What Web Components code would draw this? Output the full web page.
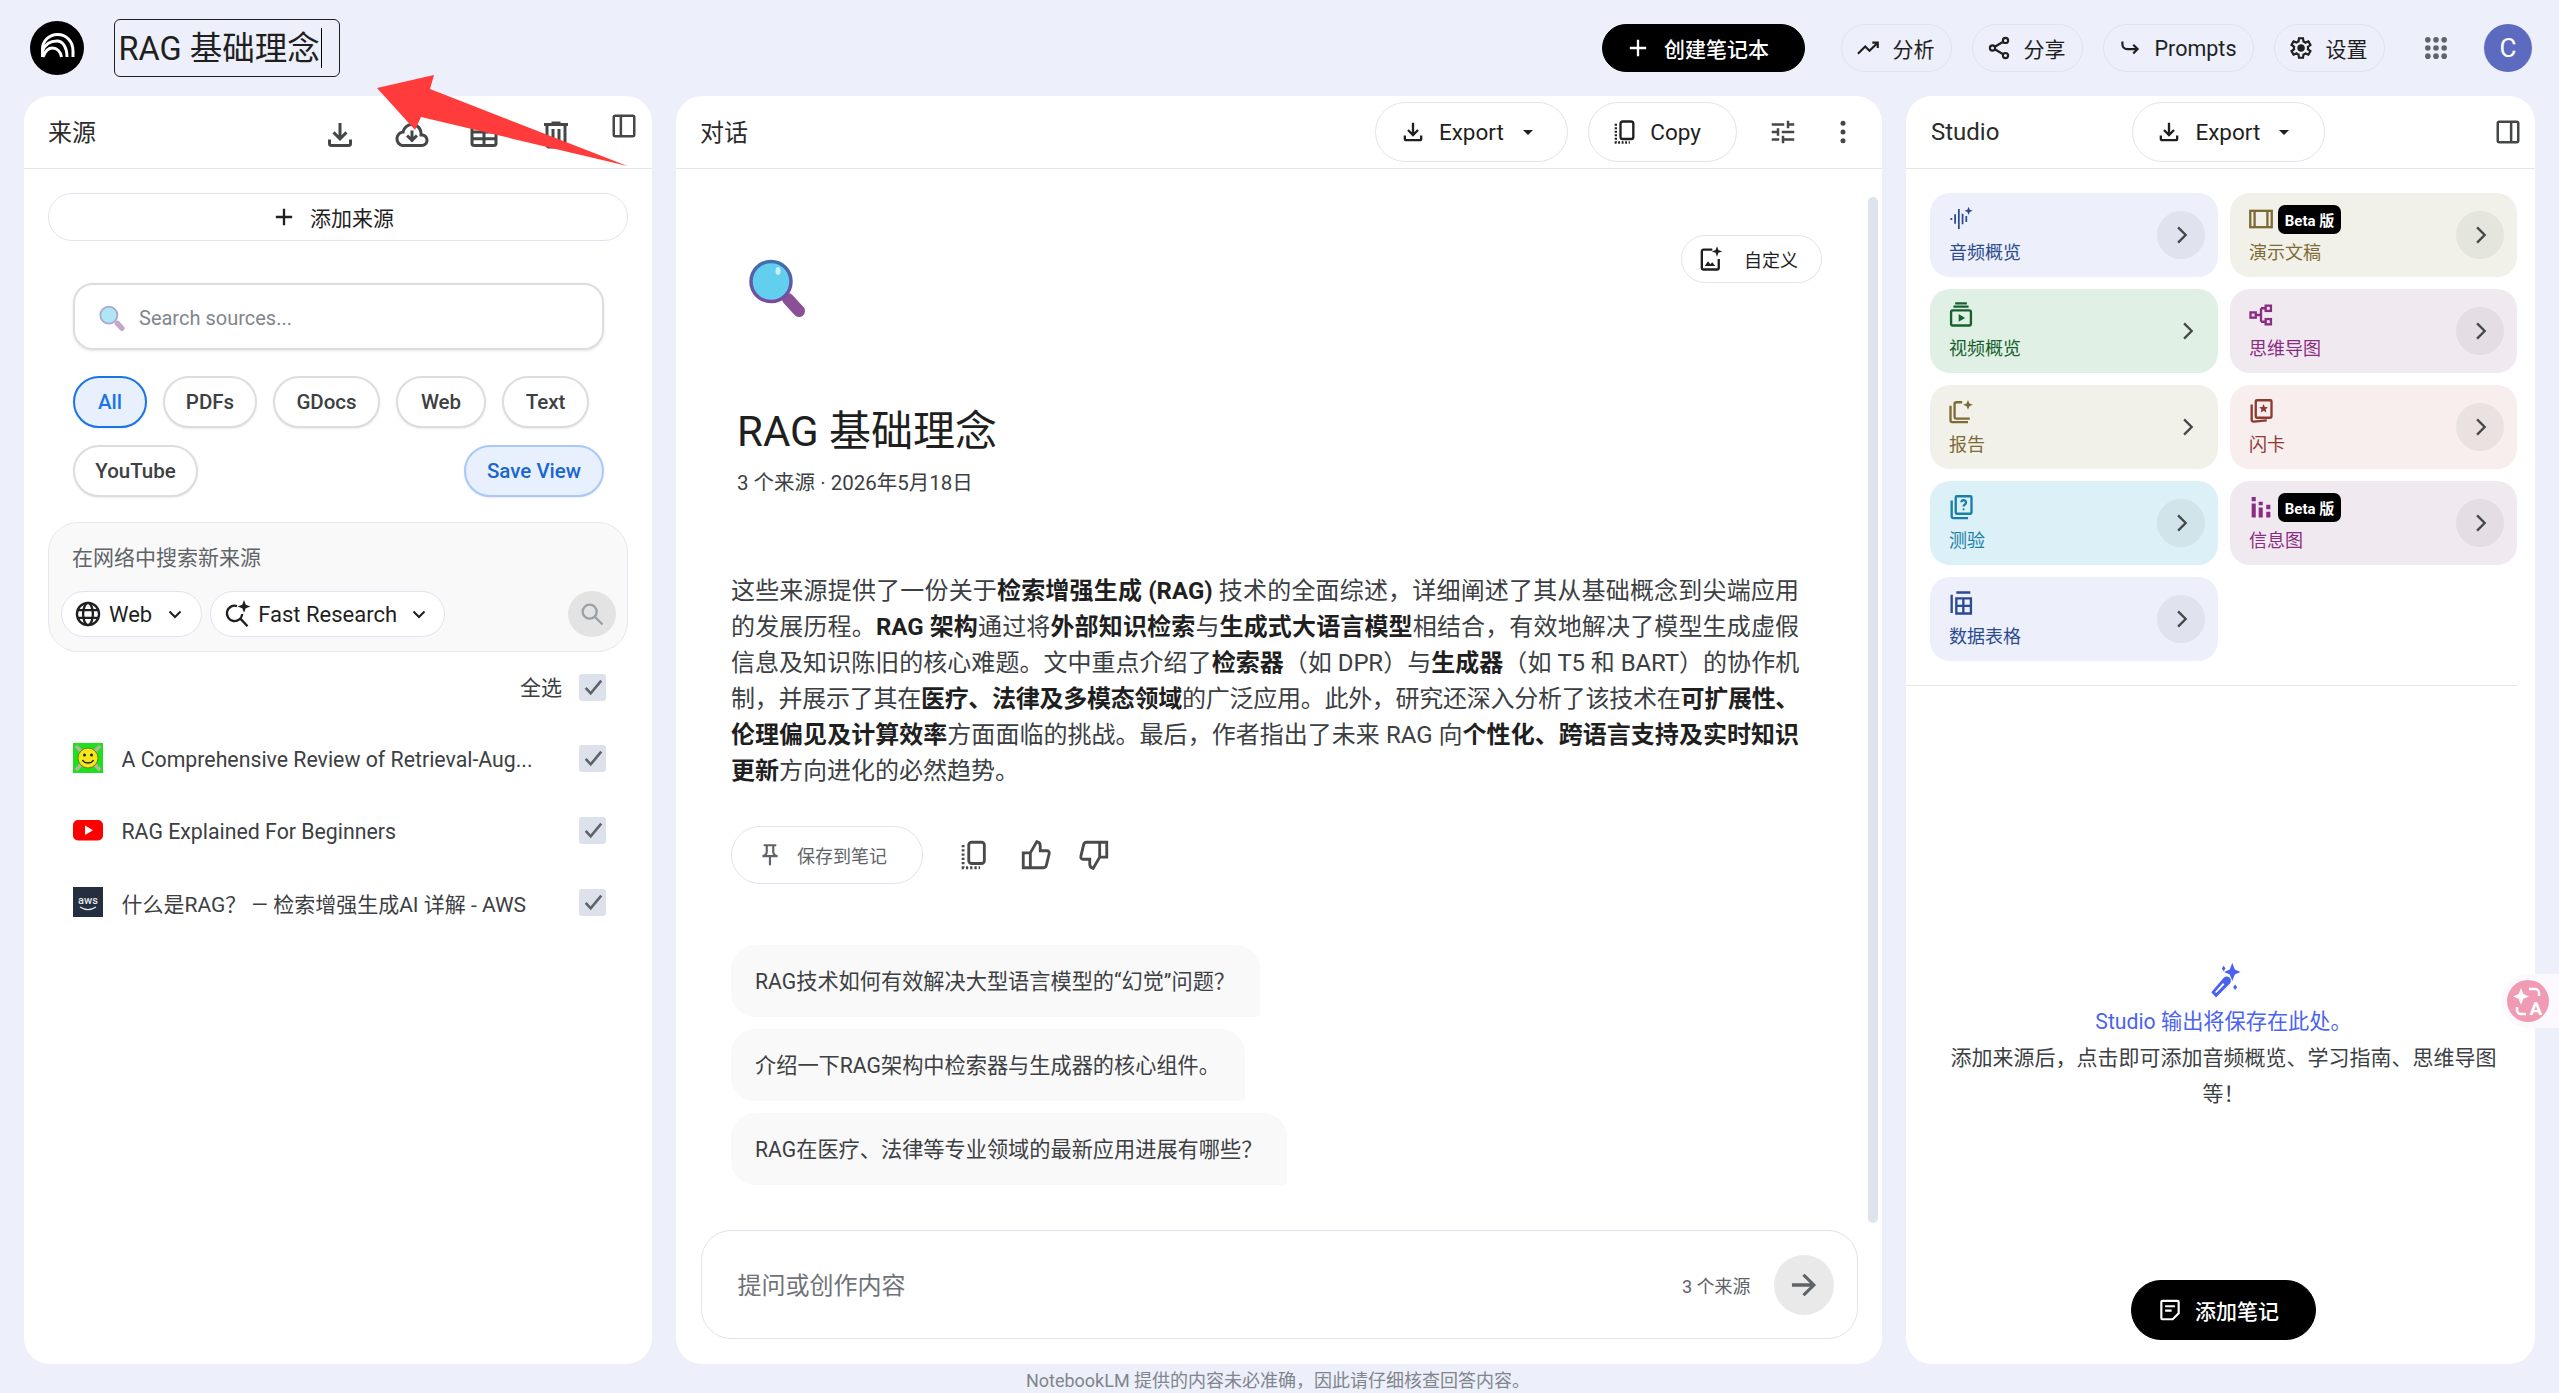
<!DOCTYPE html>
<html lang="zh">
<head>
<meta charset="utf-8">
<title>RAG 基础理念 - NotebookLM</title>
<style>
  html, body { margin: 0; height: 100%; overflow: hidden; background: #edeffa; font-family: Roboto, "Noto Sans CJK SC", sans-serif; }
</style>
</head>
<body>
<nb-app></nb-app>
<script>
/**
 * Icon bodies, all drawn on a 24x24 box. Colour comes from currentColor.
 */
const S = 'fill="none" stroke="currentColor" stroke-width="2"'
const ICONS = {
  plus: '<path d="M11 13H5v-2h6V5h2v6h6v2h-6v6h-2v-6z"/>',
  download: '<path d="M12 16l-5-5 1.4-1.45L11 12.15V4h2v8.15l2.6-2.6L17 11l-5 5zm-6 4c-.55 0-1.02-.2-1.41-.59C4.2 19.02 4 18.55 4 18v-3h2v3h12v-3h2v3c0 .55-.2 1.02-.59 1.41-.39.39-.86.59-1.41.59H6z"/>',
  cloud: '<path d="M11 13.15V9h2v4.15l1.6-1.55L16 13l-4 4-4-4 1.4-1.4 1.6 1.55zM6.5 20c-1.52 0-2.81-.53-3.89-1.58C1.54 17.38 1 16.1 1 14.6c0-1.3.39-2.46 1.17-3.48C2.95 10.1 3.97 9.45 5.25 9.15 5.67 7.62 6.5 6.38 7.75 5.43 9 4.48 10.42 4 12 4c1.95 0 3.6.68 4.96 2.04C18.32 7.4 19 9.05 19 11c1.15.13 2.1.63 2.86 1.49.76.86 1.14 1.86 1.14 3.01 0 1.25-.44 2.31-1.31 3.19-.88.87-1.94 1.31-3.19 1.31H6.5zm0-2h12c.7 0 1.29-.24 1.77-.73.49-.48.73-1.07.73-1.77s-.24-1.29-.73-1.77c-.48-.49-1.07-.73-1.77-.73H17v-2c0-1.38-.49-2.56-1.46-3.54C14.56 6.49 13.38 6 12 6s-2.56.49-3.54 1.46C7.49 8.44 7 9.62 7 11h-.5c-.97 0-1.79.34-2.47 1.03C3.34 12.71 3 13.53 3 14.5s.34 1.79 1.03 2.47C4.71 17.66 5.53 18 6.5 18z"/>',
  table: `<rect x="4" y="5" width="16" height="14" rx="1.5" ${S}/><path d="M4 10h16M4 14.5h16M12 10v9" ${S}/>`,
  trash: '<path d="M7 21c-.55 0-1.02-.2-1.41-.59C5.2 20.02 5 19.55 5 19V6H4V4h5V3h6v1h5v2h-1v13c0 .55-.2 1.02-.59 1.41-.39.39-.86.59-1.41.59H7zM17 6H7v13h10V6zM9 17h2V8H9v9zm4 0h2V8h-2v9z"/>',
  panelLeft: `<rect x="3.8" y="3.8" width="16.4" height="16.4" rx="1.2" ${S}/><path d="M9.5 4v16" ${S}/>`,
  panelRight: `<rect x="3.8" y="3.8" width="16.4" height="16.4" rx="1.2" ${S}/><path d="M14.5 4v16" ${S}/>`,
  trend: '<path d="M3.4 18 2 16.6 9.4 9.15l4 4L18.6 8H16V6h6v6h-2V9.4l-6.6 6.6-4-4L3.4 18z"/>',
  share: `<circle cx="18" cy="5" r="2.4" ${S}/><circle cx="6" cy="12" r="2.4" ${S}/><circle cx="18" cy="19" r="2.4" ${S}/><path d="M8.1 10.8l7.8-4.6M8.1 13.2l7.8 4.6" ${S}/>`,
  prompts: `<path d="M5 6v2.5A4.5 4.5 0 0 0 9.5 13H19M15 9l4 4-4 4" ${S}/>`,
  settings: '<path d="M9.25 22l-.4-3.2c-.22-.08-.42-.18-.61-.3-.2-.12-.39-.25-.58-.38l-2.97 1.25-2.75-4.75 2.58-1.95c-.02-.12-.03-.23-.03-.34v-.68c0-.11.01-.22.03-.34L1.94 9.36l2.75-4.75 2.97 1.25c.19-.13.38-.26.58-.38.2-.12.4-.22.6-.3l.4-3.2h5.5l.4 3.2c.22.08.42.18.61.3.2.12.39.25.58.38l2.97-1.25 2.75 4.75-2.58 1.95c.02.12.03.23.03.34v.68c0 .11-.01.22-.05.34l2.58 1.95-2.75 4.75-2.95-1.25c-.19.13-.38.26-.58.38-.2.12-.4.22-.6.3l-.4 3.2h-5.5zM11 20h1.97l.36-2.65c.52-.13.99-.33 1.43-.58.44-.26.84-.57 1.2-.94l2.48 1.02.97-1.7-2.15-1.63c.08-.23.14-.48.17-.73.03-.25.05-.51.05-.77s-.02-.52-.05-.77c-.03-.25-.09-.5-.17-.73l2.15-1.63-.97-1.7-2.48 1.05c-.36-.38-.76-.7-1.2-.96-.44-.26-.91-.46-1.43-.59L13 4h-1.97l-.35 2.65c-.52.13-.99.33-1.43.58-.44.26-.84.57-1.2.94L5.57 7.15l-.97 1.7 2.15 1.6c-.08.25-.14.5-.17.75-.03.25-.05.52-.05.8 0 .27.02.53.05.78.03.25.09.5.17.75l-2.15 1.62.97 1.7 2.48-1.05c.36.38.76.7 1.2.96.44.26.91.46 1.43.59L11 20zm1.05-4.5c.97 0 1.79-.34 2.48-1.03.68-.68 1.02-1.51 1.02-2.47s-.34-1.79-1.02-2.47C13.84 8.84 13.02 8.5 12.05 8.5c-.98 0-1.81.34-2.49 1.03-.67.68-1.01 1.51-1.01 2.47s.34 1.79 1.01 2.47c.68.69 1.51 1.03 2.49 1.03z"/>',
  apps: [5, 12, 19].flatMap(y => [5, 12, 19].map(x => `<circle cx="${x}" cy="${y}" r="2.4"/>`)).join(''),
  tune: '<path d="M11 21v-6h2v2h8v2h-8v2h-2zM3 19v-2h6v2H3zm4-4v-2H3v-2h4V9h2v6H7zm4-2v-2h10v2H11zm4-4V3h2v2h4v2h-4v2h-2zM3 7V5h10v2H3z"/>',
  more: '<circle cx="12" cy="5" r="2"/><circle cx="12" cy="12" r="2"/><circle cx="12" cy="19" r="2"/>',
  copy: `<rect x="9" y="3" width="11" height="15" rx="2" ${S}/><path d="M5 5v16h12" fill="none" stroke="currentColor" stroke-width="2" stroke-dasharray="1.6 1.4"/>`,
  caret: '<path d="M7 10l5 5 5-5z"/>',
  chevronDown: `<path d="M6.5 9.5l5.5 5.5 5.5-5.5" ${S} stroke-width="2.2"/>`,
  chevronRight: `<path d="M9.5 5.5L16 12l-6.5 6.5" ${S} stroke-width="2.2"/>`,
  globe: `<circle cx="12" cy="12" r="9.5" ${S}/><ellipse cx="12" cy="12" rx="4.2" ry="9.5" ${S}/><path d="M3 8.7h18M3 15.3h18" ${S}/>`,
  research: `<path d="M12 5.200A6.600 6.600 0 1 0 16.500 12" ${S} stroke-width="2.200"/><path d="M14.500 15.500l6.500 7" ${S} stroke-width="2.200"/><path d="M18 0l1.500 4 4 1.500-4 1.500-1.500 4-1.500-4-4-1.500 4-1.500z"/>`,
  search: `<circle cx="10" cy="10" r="6" ${S} stroke-width="2.2"/><path d="M14.5 14.5L21 21" ${S} stroke-width="2.4"/>`,
  customize: `<path d="M14 4H6.5A1.5 1.5 0 0 0 5 5.5v14A1.5 1.5 0 0 0 6.5 21H18a1.5 1.5 0 0 0 1.5-1.5V12" ${S}/><path d="M18 1l1.2 3.3L22.5 5.5l-3.3 1.2L18 10l-1.2-3.3L13.5 5.5l3.3-1.2zM7.5 18l2.8-4 2 2.4 1.6-1.7 2.6 3.3z"/>`,
  pin: '<path d="M14 4v5c0 1.12.37 2.16 1 3H9c.65-.86 1-1.9 1-3V4h4m3-2H7c-.55 0-1 .45-1 1s.45 1 1 1h1v5c0 1.66-1.34 3-3 3v2h5.97v7l1 1 1-1v-7H19v-2c-1.66 0-3-1.34-3-3V4h1c.55 0 1-.45 1-1s-.45-1-1-1z"/>',
  thumbUp: `<path d="M8 10.5V21M8 10.5l4.6-8c1.5.3 2.4 1.4 2.4 2.9V9h4.7c1.1 0 1.9 1 1.6 2.1l-2 8.2c-.2 1-1 1.7-2 1.7H3V10.5z" ${S} stroke-width="2.2"/>`,
  thumbDown: `<path d="M16 13.5V3M16 13.5l-4.6 8c-1.5-.3-2.4-1.4-2.4-2.9V15H4.3c-1.1 0-1.9-1-1.6-2.1l2-8.2C4.9 3.7 5.7 3 6.7 3H21v10.5z" ${S} stroke-width="2.2"/>`,
  send: '<path d="M16.2 13.2H3.5v-2.4h12.7l-5.4-5.4L12.5 4l8 8-8 8-1.7-1.4 5.4-5.4z"/>',
  audio: '<path d="M3 11.2h1.5v1.6H3zM6.2 8h1.5v8H6.2zM9.4 3.5h1.5v17H9.4zM12.6 7.5h1.5v9h-1.5zM15.8 9.5h1.5v5h-1.5z"/><path d="M18.5 1.5l1 2.5 2.5 1-2.5 1-1 2.5-1-2.5-2.5-1 2.5-1z"/>',
  slides: `<rect x="2.8" y="5" width="18.4" height="14" ${S}/><path d="M6.5 5v14M17.5 5v14" ${S}/>`,
  video: `<rect x="3.5" y="8" width="17" height="13" rx="1.5" ${S}/><path d="M5.5 4.8h13M7 2h10" ${S}/><path d="M10 11.2l5.5 3.3-5.5 3.3z"/>`,
  mindmap: `<rect x="3" y="9.8" width="4.5" height="4.5" ${S}/><rect x="16" y="4" width="4.5" height="4.5" ${S}/><rect x="16" y="15.5" width="4.5" height="4.5" ${S}/><path d="M7.5 12H12M12 6.2V17.8M12 6.2h4M12 17.8h4" ${S}/>`,
  report: `<path d="M13 4.500H8A1.500 1.500 0 0 0 6.500 6v11A1.500 1.500 0 0 0 8 18.500h11.500" ${S}/><path d="M3 7.500V20a1.500 1.500 0 0 0 1.500 1.500H18" ${S}/><path d="M18 2.500l1.200 3 3 1.200-3 1.200-1.200 3-1.200-3-3-1.200 3-1.200z"/>`,
  flash: `<rect x="7.500" y="2.800" width="13.500" height="15" rx="1" ${S}/><path d="M4 6.500V19.500c0 1 .8 1.700 1.700 1.600L17 20" ${S}/><path d="M14.200 6l1.100 2.500 2.700.2-2 1.800.6 2.700-2.400-1.400-2.400 1.400.6-2.700-2-1.800 2.700-.2z"/>`,
  quiz: `<rect x="7.500" y="2.800" width="13.500" height="15" rx="1" ${S}/><path d="M4 6.500V20a1.500 1.500 0 0 0 1.500 1.500H18" ${S}/><path d="M12.300 8a2 2 0 1 1 3 1.800c-.8.5-1.100.9-1.100 1.700" ${S} stroke-width="1.300"/><circle cx="14.200" cy="14" r=".9"/>`,
  info: '<path d="M4 9h3.500v12H4zM10 12.500h3.500V21H10zM10 7.500h3.500v3H10zM16.500 10h3.500v4h-3.500zM16.500 16h3.500v5h-3.500zM4 3.500h3.500V7H4z"/>',
  sheet: `<path d="M8 3H20M4 5V20.500M8 8h12.500v13H8zM14 8v13M8 14.500h12.500" ${S}/>`,
  wand: '<path d="M20.500 1l1.700 4.300L26 7l-3.800 1.700L20.500 13l-1.700-4.300L15 7l3.800-1.700z" transform="translate(-3.500 -1) scale(.95)"/><path d="M10.500 1.800l1.200 1.700-1.200 1.700-1.200-1.700zM17.800 13.500l1.300 1.800-1.300 1.800-1.300-1.800z"/><path d="M14.300 9.200c-1-1-2.600-1-3.600 0l-8 9.200 3 3.400 8.800-8.800c.9-1 .8-2.800-.2-3.800zM5.800 19l-.7-.7 5-5.600.9.9z"/>',
  note: `<path d="M5 3.500h14a1 1 0 0 1 1 1V15l-5.500 5.500H5a1 1 0 0 1-1-1v-15a1 1 0 0 1 1-1z" ${S} stroke-width="2.300"/><path d="M7.500 8.500h9M7.500 12.500h6" ${S} stroke-width="2.300"/>`
}

/**
 * A single icon out of the ICONS table.
 */
customElements.define('nb-icon', class extends HTMLElement {
  connectedCallback () {
    const size = this.getAttribute('size') || 24
    const root = this.shadowRoot || this.attachShadow({ mode: 'open' })
    root.innerHTML = `
      <style>:host { display: inline-flex; flex: none; width: ${size}px; height: ${size}px; color: inherit; } svg { width: 100%; height: 100%; fill: currentColor; }</style>
      <svg viewBox="0 0 24 24">${ICONS[this.getAttribute('name')] || ''}</svg>`
  }
})

/**
 * Rounded button with a leading icon, slotted label and an optional trailing icon.
 * The box is tuned from outside through custom properties.
 */
customElements.define('nb-pill', class extends HTMLElement {
  connectedCallback () {
    const icon = this.getAttribute('icon')
    const trail = this.getAttribute('trail')
    const root = this.shadowRoot || this.attachShadow({ mode: 'open' })
    root.innerHTML = `
      <style>
        :host {
          display: inline-flex; align-items: center; flex: none; box-sizing: border-box;
          height: var(--h, 60px); padding: 0 var(--pr, 24px) 0 var(--pl, 24px);
          border: 1.5px solid var(--line, #e1e3ef); border-radius: 999px;
          background: var(--bg, #fff); color: var(--fg, #1f1f1f);
          font-size: var(--fs, 21px); font-weight: var(--fw, 400); white-space: nowrap;
        }
        .label { margin: 0 var(--tgap, 0) 0 var(--gap, 12px); }
      </style>
      <nb-icon name="${icon}" size="${this.getAttribute('isize') || 28}"></nb-icon>
      <span class="label"><slot></slot></span>
      ${trail ? `<nb-icon name="${trail}" size="${this.getAttribute('tsize') || 24}"></nb-icon>` : ''}`
  }
})

/**
 * White rounded card with a header bar; `actions` slot on the right of the heading.
 */
customElements.define('nb-panel', class extends HTMLElement {
  constructor () {
    super()
    this.attachShadow({ mode: 'open' }).innerHTML = `
      <style>
        :host { display: flex; flex-direction: column; position: relative; min-width: 0; background: #fff; border-radius: 26px; overflow: hidden; }
        header { display: flex; align-items: center; flex: none; box-sizing: border-box; height: 73px; border-bottom: 1.5px solid #e3e6ee; padding: 0 0 0 var(--head-pl, 24px); font-size: 24px; color: #2b2b2b; }
        .body { flex: 1; display: flex; flex-direction: column; min-height: 0; }
      </style>
      <header><slot name="heading"></slot><slot name="actions"></slot></header>
      <div class="body"><slot></slot></div>`
  }
})

/**
 * Filter chip of the source list.
 */
customElements.define('filter-chip', class extends HTMLElement {
  constructor () {
    super()
    this.attachShadow({ mode: 'open' }).innerHTML = `
      <style>
        :host {
          display: inline-flex; align-items: center; justify-content: center; box-sizing: border-box;
          height: 52px; border: 2.5px solid #dcdde0; border-radius: 27px;
          box-shadow: 0 1px 2px rgba(0,0,0,.08); background: #fff;
          font-size: 20.5px; font-weight: 500; color: #3c4043;
        }
        :host([active]) { background: #e8f0fe; border-color: #1a73e8; color: #1a73e8; }
        :host([save]) { background: #e8f0fe; border-color: #a8c7fa; color: #1a66d0; margin-left: auto; }
      </style>
      <slot></slot>`
  }
})

/**
 * Grey check mark box.
 */
customElements.define('check-box', class extends HTMLElement {
  constructor () {
    super()
    this.attachShadow({ mode: 'open' }).innerHTML = `
      <style>
        :host { display: inline-flex; flex: none; width: 27px; height: 27px; background: #dde1ec; border-radius: 3px; align-items: center; justify-content: center; color: #5f6368; }
        svg { width: 22px; height: 22px; }
      </style>
      <svg viewBox="0 0 24 24"><path d="M4 13l5.500 6L21 5" fill="none" stroke="currentColor" stroke-width="2.800"/></svg>`
  }
})

/**
 * One source of the list: favicon in the slot, a title and a check box.
 */
customElements.define('source-row', class extends HTMLElement {
  connectedCallback () {
    const root = this.shadowRoot || this.attachShadow({ mode: 'open' })
    root.innerHTML = `
      <style>
        :host { display: flex; align-items: center; height: 72px; padding: 0 46px 0 49px; font-size: var(--tfs, 21.3px); color: #3c4043; }
        .fav { display: flex; width: 30px; height: 30px; flex: none; margin-right: 18.5px; }
        .title { flex: 1; white-space: nowrap; overflow: hidden; padding-top: 2px; }
      </style>
      <span class="fav"><slot name="fav"></slot></span>
      <span class="title">${this.getAttribute('title')}</span>
      <check-box></check-box>`
  }
})

/**
 * The left column.
 */
customElements.define('source-panel', class extends HTMLElement {
  constructor () {
    super()
    this.attachShadow({ mode: 'open' }).innerHTML = `
      <style>
        :host { display: flex; min-width: 0; }
        nb-panel { flex: 1; }
        .head { margin-top: -3px; }
        .acts { display: flex; align-items: center; margin-left: auto; color: #444746; padding-right: 13px; }
        .acts nb-icon { margin-top: 6px; margin-left: 36px; }
        .acts nb-icon:first-child { margin-left: 0; }
        .acts nb-icon.toggle { margin-top: -12px; margin-left: 35px; }
        .add {
          display: flex; align-items: center; justify-content: center; gap: 12px; box-sizing: border-box;
          height: 48px; margin: 24px 24px 0; padding-right: 12px; border: 1.5px solid #e1e3ef; border-radius: 24px; font-size: 21px; color: #1f1f1f;
        }
        .search {
          display: flex; align-items: center; box-sizing: border-box; height: 67px; margin: 42px 48px 0 49px; padding: 2px 0 0 24px;
          border: 2.5px solid #dcdde0; border-radius: 20px; box-shadow: 0 1px 3px rgba(0,0,0,.1); font-size: 20px; color: #80868b;
        }
        .search svg { width: 26px; height: 26px; margin-right: 14px; opacity: .5; }
        .chips { display: flex; flex-wrap: wrap; gap: 17px 16px; margin: 26px 48px 0 49px; }
        .web { box-sizing: border-box; height: 130px; margin: 25px 24px 0; border: 1.5px solid #e6e7f0; border-radius: 30px; background: #f9f9f9; padding: 22px 11px 0 12px; }
        .web .label { font-size: 21px; line-height: 26px; color: #5f6368; padding-left: 11px; }
        .web .tools { display: flex; align-items: center; gap: 8px; margin-top: 20px; --h: 46px; --fs: 22px; }
        .go { display: flex; align-items: center; justify-content: center; width: 48px; height: 46px; margin-left: auto; border-radius: 50%; background: #e3e3e3; color: #9aa0a6; }
        .all { display: flex; align-items: center; justify-content: flex-end; gap: 17px; height: 70px; padding-right: 46px; font-size: 21px; color: #3c4043; }
        .all span { margin-top: -3px; }
      </style>
      <nb-panel>
        <span slot="heading" class="head">来源</span>
        <div slot="actions" class="acts">
          <nb-icon name="download" size="36"></nb-icon>
          <nb-icon name="cloud" size="36"></nb-icon>
          <nb-icon name="table" size="36"></nb-icon>
          <nb-icon name="trash" size="36"></nb-icon>
          <nb-icon class="toggle" name="panelLeft" size="30"></nb-icon>
        </div>
        <div class="add"><nb-icon name="plus" size="28"></nb-icon><span>添加来源</span></div>
        <div class="search">
          <svg viewBox="0 0 58 58"><circle cx="22" cy="22.500" r="19" fill="#62cfee" stroke="#5a4ea0" stroke-width="4"/><path d="M41 41l10 11" stroke="#8a4f94" stroke-width="12" stroke-linecap="round"/></svg>
          <span>Search sources...</span>
        </div>
        <div class="chips">
          <filter-chip active style="width:74px">All</filter-chip>
          <filter-chip style="width:94px">PDFs</filter-chip>
          <filter-chip style="width:107px">GDocs</filter-chip>
          <filter-chip style="width:90px">Web</filter-chip>
          <filter-chip style="width:87px">Text</filter-chip>
          <filter-chip style="width:125px">YouTube</filter-chip>
          <filter-chip save style="width:140px">Save View</filter-chip>
        </div>
        <div class="web">
          <div class="label">在网络中搜索新来源</div>
          <div class="tools">
            <nb-pill icon="globe" isize="28" trail="chevronDown" tsize="24" style="--pl:12px;--pr:14px;--gap:7px;--tgap:11px">Web</nb-pill>
            <nb-pill icon="research" isize="28" trail="chevronDown" tsize="24" style="--pl:12px;--pr:13px;--gap:7px;--tgap:10px">Fast Research</nb-pill>
            <div class="go"><nb-icon name="search" size="28"></nb-icon></div>
          </div>
        </div>
        <div class="all"><span>全选</span><check-box></check-box></div>
        <source-row title="A Comprehensive Review of Retrieval-Aug...">
          <svg slot="fav" viewBox="0 0 30 30" width="30" height="30">
            <rect width="30" height="30" fill="#1fe01f"/>
            <path d="M4 4l22 22M26 4L4 26" stroke="#b9b49a" stroke-width="3.500" stroke-linecap="round"/>
            <circle cx="15" cy="15" r="10" fill="#f4e61a" stroke="#7d7a18"/>
            <circle cx="11.500" cy="12" r="1.500" fill="#222"/><circle cx="18.500" cy="12" r="1.500" fill="#222"/>
            <path d="M9.500 17c2 4 9 4 11 0" fill="none" stroke="#222" stroke-width="1.400"/>
          </svg>
        </source-row>
        <source-row title="RAG Explained For Beginners">
          <svg slot="fav" viewBox="0 0 30 30" width="30" height="30">
            <rect x="0" y="5" width="30" height="20.500" rx="5" fill="#f00"/>
            <path d="M12 10.500l8 4.700-8 4.700z" fill="#fff"/>
          </svg>
        </source-row>
        <source-row style="--tfs:21px" title="什么是RAG？ — 检索增强生成AI 详解 - AWS">
          <svg slot="fav" viewBox="0 0 30 30" width="30" height="30">
            <rect width="30" height="30" fill="#232f3e"/>
            <text x="15" y="17" text-anchor="middle" font-family="Roboto, sans-serif" font-size="11" font-weight="500" fill="#e6e8ea">aws</text>
            <path d="M7 20c5 3.200 11 3.200 16 0" fill="none" stroke="#e6e8ea" stroke-width="1.300"/>
          </svg>
        </source-row>
      </nb-panel>`
  }
})

/**
 * Suggested question bubble.
 */
customElements.define('suggest-chip', class extends HTMLElement {
  constructor () {
    super()
    this.attachShadow({ mode: 'open' }).innerHTML = `
      <style>
        :host { display: flex; align-items: center; box-sizing: border-box; width: fit-content; height: 72px; padding: 0 25px 3px 24px; background: #f9f9f9; border-radius: 24px 24px 4px 24px; font-size: 21.2px; color: #3c4043; }
      </style>
      <slot></slot>`
  }
})

/**
 * The middle column.
 */
customElements.define('chat-panel', class extends HTMLElement {
  constructor () {
    super()
    this.attachShadow({ mode: 'open' }).innerHTML = `
      <style>
        :host { display: flex; min-width: 0; }
        nb-panel { flex: 1; }
        .head { margin-top: -3px; }
        .acts { display: flex; align-items: center; margin-left: auto; padding-right: 24px; color: #444746; --fs: 22.5px; }
        .acts nb-pill { --h: 60px; margin-right: 20px; }
        .acts nb-icon { margin-left: 30px; }
        .acts nb-pill + nb-pill { margin-right: 1px; }
        .main { flex: 1; min-height: 0; padding: 66px 0 0 55px; }
        .top { display: flex; justify-content: space-between; align-items: flex-start; padding-right: 60px; }
        .emoji { width: 58px; height: 58px; margin: 24px 0 0 18px; }
        h1 { margin: 87px 0 0 6px; font-size: 42px; line-height: 56px; font-weight: 400; color: #1f1f1f; }
        .meta { margin: 8px 0 0 6px; font-size: 20.500px; line-height: 30px; color: #3c4043; }
        .sum { width: 1068px; margin: 75px 0 0; font-size: 24px; line-height: 36px; color: #3c4043; }
        .sum span { display: block; text-align: justify; text-align-last: justify; }
        .sum span:last-child { text-align-last: left; }
        .sum b { font-weight: 700; color: #1f1f1f; }
        .act { display: flex; align-items: center; margin-top: 37px; color: #4a4a4a; }
        .act nb-icon.c { margin-left: 33px; }
        .act nb-icon.u { margin-left: 29px; }
        .act nb-icon.d { margin-left: 24px; }
        .chips { display: flex; flex-direction: column; gap: 12px; margin-top: 61px; }
        .ask { display: flex; align-items: center; flex: none; box-sizing: border-box; height: 109px; margin: 0 24.500px 25px; padding: 0 23px 0 36px; border: 1.5px solid #e0e2ec; border-radius: 30px; }
        .ph { flex: 1; font-size: 24px; color: #6f7378; margin-top: -3px; }
        .cnt { font-size: 18px; color: #5f6368; margin-right: 23px; }
        .send { display: flex; align-items: center; justify-content: center; width: 60px; height: 60px; border-radius: 50%; background: #e9e9e9; color: #5f6368; }
        .thumb { position: absolute; right: 4px; top: 101px; width: 10px; height: 1026px; border-radius: 5px; background: #dfe3ee; }
      </style>
      <nb-panel>
        <span slot="heading" class="head">对话</span>
        <div slot="actions" class="acts">
          <nb-pill icon="download" trail="caret" isize="28" tsize="24" style="--pl:23px;--pr:27.5px;--gap:12px;--tgap:12px">Export</nb-pill>
          <nb-pill icon="copy" isize="28" style="--pl:21px;--pr:35px;--gap:12px">Copy</nb-pill>
          <nb-icon name="tune" size="30"></nb-icon>
          <nb-icon name="more" size="30"></nb-icon>
        </div>
        <div class="main">
          <div class="top">
            <svg class="emoji" viewBox="0 0 58 58">
              <defs><linearGradient id="h" x1="0" y1="0" x2="0" y2="1"><stop offset="0" stop-color="#3f6fb0"/><stop offset="1" stop-color="#7a4aa0"/></linearGradient></defs>
              <path d="M39 40l11 12" stroke="#8a4f94" stroke-width="12" stroke-linecap="round"/>
              <circle cx="22" cy="22.500" r="20" fill="#62cfee" stroke="url(#h)" stroke-width="3.500"/>
              <ellipse cx="29" cy="12" rx="2.500" ry="4" fill="#c8eff8"/>
            </svg>
            <nb-pill icon="customize" isize="28" style="--h:48px;--fs:18px;--pl:14px;--pr:23px;--gap:20px">自定义</nb-pill>
          </div>
          <h1>RAG 基础理念</h1>
          <div class="meta">3 个来源 · 2026年5月18日</div>
          <p class="sum">
            <span>这些来源提供了一份关于<b>检索增强生成 (RAG)</b> 技术的全面综述，详细阐述了其从基础概念到尖端应用</span>
            <span>的发展历程。<b>RAG 架构</b>通过将<b>外部知识检索</b>与<b>生成式大语言模型</b>相结合，有效地解决了模型生成虚假</span>
            <span style="letter-spacing:-.2px">信息及知识陈旧的核心难题。文中重点介绍了<b>检索器</b>（如 DPR）与<b>生成器</b>（如 T5 和 BART）的协作机</span>
            <span style="letter-spacing:-.35px">制，并展示了其在<b>医疗、法律及多模态领域</b>的广泛应用。此外，研究还深入分析了该技术在<b>可扩展性、</b></span>
            <span><b>伦理偏见及计算效率</b>方面面临的挑战。最后，作者指出了未来 RAG 向<b>个性化、跨语言支持及实时知识</b></span>
            <span><b>更新</b>方向进化的必然趋势。</span>
          </p>
          <div class="act">
            <nb-pill icon="pin" isize="26" style="--h:58px;--fs:18px;--fg:#5f6368;--pl:25px;--pr:35px;--gap:14px">保存到笔记</nb-pill>
            <nb-icon class="c" name="copy" size="34"></nb-icon>
            <nb-icon class="u" name="thumbUp" size="34"></nb-icon>
            <nb-icon class="d" name="thumbDown" size="34"></nb-icon>
          </div>
          <div class="chips">
            <suggest-chip>RAG技术如何有效解决大型语言模型的“幻觉”问题？</suggest-chip>
            <suggest-chip>介绍一下RAG架构中检索器与生成器的核心组件。</suggest-chip>
            <suggest-chip>RAG在医疗、法律等专业领域的最新应用进展有哪些？</suggest-chip>
          </div>
        </div>
        <div class="ask">
          <span class="ph">提问或创作内容</span>
          <span class="cnt">3 个来源</span>
          <span class="send"><nb-icon name="send" size="34"></nb-icon></span>
        </div>
        <div class="thumb"></div>
      </nb-panel>`
  }
})

/**
 * Tile of the Studio grid.
 */
customElements.define('studio-card', class extends HTMLElement {
  connectedCallback () {
    const root = this.shadowRoot || this.attachShadow({ mode: 'open' })
    const beta = this.hasAttribute('beta') ? '<span class="beta">Beta 版</span>' : ''
    root.innerHTML = `
      <style>
        :host { display: flex; align-items: center; box-sizing: border-box; height: 84px; padding: 0 13px 0 17px; border-radius: 20px; background: ${this.getAttribute('bg')}; color: ${this.getAttribute('fg')}; }
        .left { flex: 1; min-width: 0; }
        .top { display: flex; align-items: center; gap: 3px; height: 29px; margin-top: -1px; }
        .beta { display: inline-flex; align-items: center; justify-content: center; width: 63px; height: 29px; border-radius: 7px; background: #000; color: #fff; font-size: 15px; font-weight: 700; }
        .lab { margin: 7px 0 0 2px; font-size: 18px; line-height: 24px; }
        .arrow { display: flex; align-items: center; justify-content: center; width: 48px; height: 48px; border-radius: 50%; background: rgba(60,64,67,.07); color: #444746; }
        :host([flat]) .arrow { background: none; transform: translateX(6px); }
      </style>
      <div class="left">
        <div class="top"><nb-icon name="${this.getAttribute('icon')}" size="28"></nb-icon>${beta}</div>
        <div class="lab">${this.getAttribute('label')}</div>
      </div>
      <span class="arrow"><nb-icon name="chevronRight" size="28"></nb-icon></span>`
  }
})

/**
 * The right column.
 */
customElements.define('studio-panel', class extends HTMLElement {
  constructor () {
    super()
    this.attachShadow({ mode: 'open' }).innerHTML = `
      <style>
        :host { display: flex; min-width: 0; --head-pl: 25px; }
        nb-panel { flex: 1; }
        .acts { display: flex; flex: 1; align-items: center; padding-right: 12.5px; color: #444746; --fs: 22.5px; }
        .acts nb-pill { margin-left: 133px; }
        .acts nb-icon { margin-left: auto; }
        .grid { display: grid; grid-template-columns: 288px 287px; grid-auto-rows: 84px; gap: 12px; padding: 24px 0 0 24px; }
        hr { height: 0; width: 611px; margin: 24px 0 0; border: 0; border-top: 1.500px solid #e3e6ee; }
        .empty { display: flex; flex-direction: column; align-items: center; flex: 1; padding: 277px 30px 24px 36px; text-align: center; }
        .wand { color: #4a63ee; transform: translateX(2px); }
        .t1 { font-size: 21.2px; line-height: 36px; color: #4a63f0; margin-top: 2.5px; }
        .t2 { font-size: 21px; line-height: 36px; color: #3c4043; }
        .addn { margin-top: auto; --fs: 21px; --bg: #000; --fg: #fff; --line: #000; --fw: 500; }
      </style>
      <nb-panel>
        <span slot="heading">Studio</span>
        <div slot="actions" class="acts">
          <nb-pill icon="download" trail="caret" isize="28" tsize="24" style="--pl:22px;--pr:28px;--gap:12px;--tgap:12px">Export</nb-pill>
          <nb-icon name="panelRight" size="30"></nb-icon>
        </div>
        <div class="grid">
          <studio-card icon="audio" label="音频概览" bg="#edeffa" fg="#2a4b8f"></studio-card>
          <studio-card icon="slides" label="演示文稿" bg="#f2f1e9" fg="#7d6a35" beta></studio-card>
          <studio-card icon="video" label="视频概览" bg="#e1f0e4" fg="#16602f" flat></studio-card>
          <studio-card icon="mindmap" label="思维导图" bg="#f1e9f0" fg="#8a2c83"></studio-card>
          <studio-card icon="report" label="报告" bg="#f2f1e9" fg="#7d6a35" flat></studio-card>
          <studio-card icon="flash" label="闪卡" bg="#f7eeed" fg="#8e3a33"></studio-card>
          <studio-card icon="quiz" label="测验" bg="#dcf0f7" fg="#1a7fa8"></studio-card>
          <studio-card icon="info" label="信息图" bg="#f1e9f0" fg="#8a2c83" beta></studio-card>
          <studio-card icon="sheet" label="数据表格" bg="#edeffa" fg="#2a4b8f"></studio-card>
        </div>
        <hr>
        <div class="empty">
          <nb-icon class="wand" name="wand" size="38"></nb-icon>
          <div class="t1">Studio 输出将保存在此处。</div>
          <div class="t2">添加来源后，点击即可添加音频概览、学习指南、思维导图等！</div>
          <nb-pill class="addn" icon="note" isize="26" style="--pl:25px;--pr:36px;--gap:12px">添加笔记</nb-pill>
        </div>
      </nb-panel>`
  }
})

/**
 * The bar above the columns.
 */
customElements.define('top-bar', class extends HTMLElement {
  constructor () {
    super()
    this.attachShadow({ mode: 'open' }).innerHTML = `
      <style>
        :host { display: flex; align-items: center; box-sizing: border-box; height: 96px; padding: 0 27px 0 30px; }
        .logo { width: 54px; height: 54px; flex: none; }
        .title { display: flex; align-items: center; box-sizing: border-box; width: 226px; height: 58px; margin-left: 30px; padding-left: 3.5px; border: 1.500px solid #1f1f1f; border-radius: 6px; font-size: 32.5px; color: #1f1f1f; white-space: nowrap; }
        .title span:first-child { margin-top: -5px; }
        .caret { width: 1.500px; height: 40px; background: #000; margin-left: 1px; }
        .tools { display: flex; align-items: center; gap: 20px; margin-left: auto; color: #444746; --h: 48px; --pl: 13px; --pr: 16px; --gap: 12px; --bg: transparent; }
        .new { --bg: #000; --fg: #fff; --line: #000; --fw: 500; --pl: 21.5px; --pr: 34.5px; margin-right: 16px; }
        .apps { margin: 0 34.5px 0 17px; color: #5f6368; }
        .avatar { display: flex; align-items: center; justify-content: center; width: 48px; height: 48px; border-radius: 50%; background: #5c6bc0; color: #fff; font-size: 26px; }
      </style>
      <svg class="logo" viewBox="0 0 54 54">
        <circle cx="27" cy="27" r="27" fill="#000"/>
        <g fill="none" stroke="#fff" stroke-width="3">
          <path d="M12.500 36V28C12.500 20 19 13.500 27.500 13.500C36.500 13.500 43 20.500 43 30V36"/>
          <path d="M12.500 30C15 23 21 20 27 20C33 20 37 26.500 37 36"/>
          <path d="M13 36C15 30.500 18.500 27 22.500 27C27 27 30.500 30.500 31.500 36"/>
        </g>
      </svg>
      <div class="title"><span>RAG 基础理念</span><span class="caret"></span></div>
      <div class="tools">
        <nb-pill class="new" icon="plus">创建笔记本</nb-pill>
        <nb-pill icon="trend" isize="26">分析</nb-pill>
        <nb-pill icon="share" isize="26">分享</nb-pill>
        <nb-pill icon="prompts" isize="26" style="--fs:21.5px">Prompts</nb-pill>
        <nb-pill icon="settings" isize="26">设置</nb-pill>
        <nb-icon class="apps" name="apps" size="28"></nb-icon>
      </div>
      <div class="avatar">C</div>`
  }
})

/**
 * Page root: bar, three columns, disclaimer, and what floats over them.
 */
customElements.define('nb-app', class extends HTMLElement {
  constructor () {
    super()
    this.attachShadow({ mode: 'open' }).innerHTML = `
      <style>
        :host { display: block; position: relative; height: 1393px; overflow: hidden; }
        .cols { display: grid; grid-template-columns: 628px 1206px 629px; gap: 24px; height: 1268px; padding: 0 24px; }
        footer { box-sizing: border-box; height: 29px; padding-top: 5px; margin-left: -3px; text-align: center; font-size: 18px; line-height: 24px; color: #80868b; }
        .arrow { position: absolute; left: 0; top: 0; width: 700px; height: 200px; pointer-events: none; }
        .translate { position: absolute; right: 0; top: 974px; display: flex; align-items: center; box-sizing: border-box; width: 58px; height: 54px; padding-left: 6px; border-radius: 27px 0 0 27px; background: #fbf9fd; }
        .translate svg { width: 42px; height: 42px; }
      </style>
      <top-bar></top-bar>
      <div class="cols">
        <source-panel></source-panel>
        <chat-panel></chat-panel>
        <studio-panel></studio-panel>
      </div>
      <footer>NotebookLM 提供的内容未必准确，因此请仔细核查回答内容。</footer>
      <svg class="arrow" viewBox="0 0 700 200"><polygon points="377,88 434,75 430,89 627.500,166 421,117 415,130" fill="#ff3b3b"/></svg>
      <div class="translate">
        <svg viewBox="0 0 42 42">
          <circle cx="21" cy="21" r="21" fill="#f09ab3"/>
          <path d="M14 8l2.400 6 5.600 2.400-5.600 2.400-2.400 6-2.400-6-5.600-2.400 5.600-2.400z" fill="#fff"/>
          <path d="M22 9h6a4 4 0 0 1 4 4v3M10 27v3a4 4 0 0 0 4 4h5" fill="none" stroke="#fff" stroke-width="2.400"/>
          <text x="29" y="35" text-anchor="middle" font-family="Roboto, sans-serif" font-size="19" font-weight="700" fill="#fff">A</text>
        </svg>
      </div>`
  }
})
</script>
</body>
</html>
